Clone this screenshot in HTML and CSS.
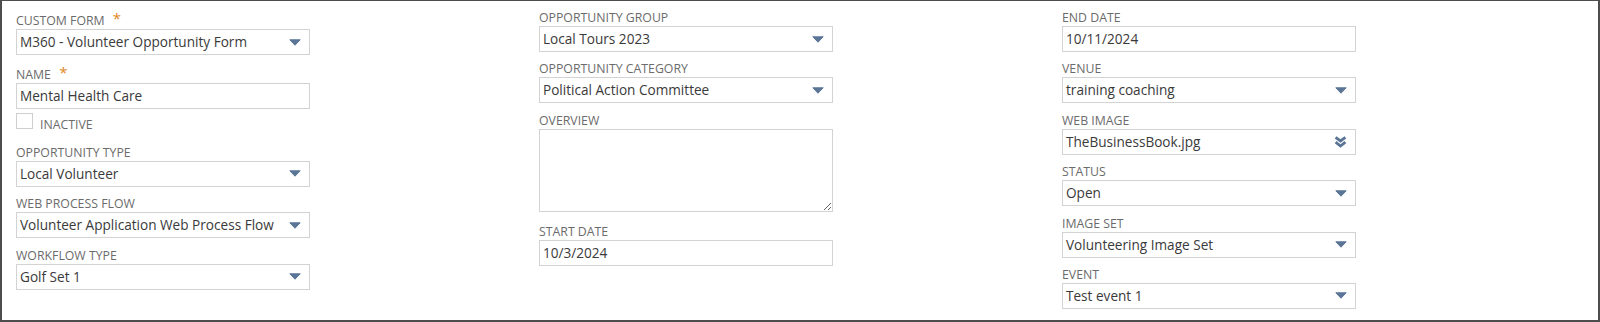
FILE: index.html
```html
<!DOCTYPE html>
<html lang="en">
<head>
  <meta charset="UTF-8">
  <title>Volunteer Opportunity</title>
  <link rel="stylesheet" href="styles.css">
</head>
<body>

<div class="form">
  <!-- left column -->
  <div class="col">
    <div class="field">
      <div class="label tall">Custom Form <span class="req">*</span></div>
      <div class="select">M360 - Volunteer Opportunity Form
        <svg class="arrow" width="12" height="7" viewBox="0 0 12 7"><path d="M0.8 0.8 H11.2 L6 6.2 Z"/></svg>
      </div>
    </div>
    <div class="field">
      <div class="label tall">Name <span class="req">*</span></div>
      <div class="input">Mental Health Care</div>
    </div>
    <div class="check-row">
      <span class="checkbox"></span>
      <span class="check-label">Inactive</span>
    </div>
    <div class="field">
      <div class="label">Opportunity Type</div>
      <div class="select">Local Volunteer
        <svg class="arrow" width="12" height="7" viewBox="0 0 12 7"><path d="M0.8 0.8 H11.2 L6 6.2 Z"/></svg>
      </div>
    </div>
    <div class="field">
      <div class="label">Web Process Flow</div>
      <div class="select">Volunteer Application Web Process Flow
        <svg class="arrow" width="12" height="7" viewBox="0 0 12 7"><path d="M0.8 0.8 H11.2 L6 6.2 Z"/></svg>
      </div>
    </div>
    <div class="field">
      <div class="label">Workflow Type</div>
      <div class="select">Golf Set 1
        <svg class="arrow" width="12" height="7" viewBox="0 0 12 7"><path d="M0.8 0.8 H11.2 L6 6.2 Z"/></svg>
      </div>
    </div>
  </div>

  <!-- middle column -->
  <div class="col">
    <div class="field">
      <div class="label">Opportunity Group</div>
      <div class="select">Local Tours 2023
        <svg class="arrow" width="12" height="7" viewBox="0 0 12 7"><path d="M0.8 0.8 H11.2 L6 6.2 Z"/></svg>
      </div>
    </div>
    <div class="field">
      <div class="label">Opportunity Category</div>
      <div class="select">Political Action Committee
        <svg class="arrow" width="12" height="7" viewBox="0 0 12 7"><path d="M0.8 0.8 H11.2 L6 6.2 Z"/></svg>
      </div>
    </div>
    <div class="field">
      <div class="label">Overview</div>
      <textarea class="textarea"></textarea>
    </div>
    <div class="field">
      <div class="label">Start Date</div>
      <div class="input">10/3/2024</div>
    </div>
  </div>

  <!-- right column -->
  <div class="col">
    <div class="field">
      <div class="label">End Date</div>
      <div class="input">10/11/2024</div>
    </div>
    <div class="field">
      <div class="label">Venue</div>
      <div class="select">training coaching
        <svg class="arrow" width="12" height="7" viewBox="0 0 12 7"><path d="M0.8 0.8 H11.2 L6 6.2 Z"/></svg>
      </div>
    </div>
    <div class="field">
      <div class="label">Web Image</div>
      <div class="select">TheBusinessBook.jpg
        <svg class="chevrons" width="13" height="12" viewBox="0 0 13 12"><path d="M1.6 1.4 L6.5 5 L11.4 1.4 M1.6 6.2 L6.5 10 L11.4 6.2"/></svg>
      </div>
    </div>
    <div class="field">
      <div class="label">Status</div>
      <div class="select">Open
        <svg class="arrow" width="12" height="7" viewBox="0 0 12 7"><path d="M0.8 0.8 H11.2 L6 6.2 Z"/></svg>
      </div>
    </div>
    <div class="field">
      <div class="label">Image Set</div>
      <div class="select">Volunteering Image Set
        <svg class="arrow" width="12" height="7" viewBox="0 0 12 7"><path d="M0.8 0.8 H11.2 L6 6.2 Z"/></svg>
      </div>
    </div>
    <div class="field">
      <div class="label">Event</div>
      <div class="select">Test event 1
        <svg class="arrow" width="12" height="7" viewBox="0 0 12 7"><path d="M0.8 0.8 H11.2 L6 6.2 Z"/></svg>
      </div>
    </div>
  </div>
</div>

</body>
</html>
```

FILE: styles.css
```css
body {
  margin: 0;
  font-family: 'Open Sans', 'Liberation Sans', sans-serif;
  background-color: #fff;
}

.form {
  width: 1600px;
  height: 322px;
  box-sizing: border-box;
  border: 2px solid #4d4d4d;
  border-top-width: 1px;
  padding: 8px 0 0 14px;
  display: grid;
  grid-template-columns: 294px 294px 294px;
  column-gap: 229px;
  align-items: start;
}

.col {
  display: flex;
  flex-direction: column;
  gap: 8.4px;
}

.label {
  font-size: 12.3px;
  line-height: 17px;
  height: 17px;
  color: #6b6b6b;
  text-transform: uppercase;
  white-space: nowrap;
}

.label.tall {
  line-height: 20px;
  height: 20px;
}

.req {
  color: #e0891c;
  font-size: 15px;
  margin-left: 5px;
  position: relative;
  top: -1px;
}

.input, .select {
  height: 26px;
  box-sizing: border-box;
  border: 1px solid #d3d3d3;
  background-color: #fff;
  padding: 0 8px 0 3px;
  font-size: 13.6px;
  line-height: 24px;
  color: #3a3a3a;
  display: flex;
  align-items: center;
  justify-content: space-between;
  white-space: nowrap;
}

.arrow {
  fill: #5b7597;
  stroke: #5b7597;
  stroke-width: 1;
  stroke-linejoin: round;
  flex: none;
}

.chevrons {
  fill: none;
  stroke: #5b7597;
  stroke-width: 2.8;
  flex: none;
  margin-right: 0;
}

.check-row {
  height: 26px;
  margin-top: -8.4px;
  box-sizing: border-box;
  padding-top: 4px;
  display: flex;
  align-items: flex-start;
}

.checkbox {
  width: 17px;
  height: 16px;
  box-sizing: border-box;
  border: 1px solid #cfcfcf;
  background-color: #fff;
}

.check-label {
  margin-left: 7px;
  margin-top: 5px;
  font-size: 12.3px;
  line-height: 13px;
  color: #6b6b6b;
  text-transform: uppercase;
}

.textarea {
  display: block;
  width: 294px;
  height: 83px;
  box-sizing: border-box;
  margin: 0 0 3px 0;
  border: 1px solid #d3d3d3;
  padding: 3px;
  font-family: inherit;
  font-size: 14px;
  color: #333;
  resize: vertical;
  outline: none;
}
```
